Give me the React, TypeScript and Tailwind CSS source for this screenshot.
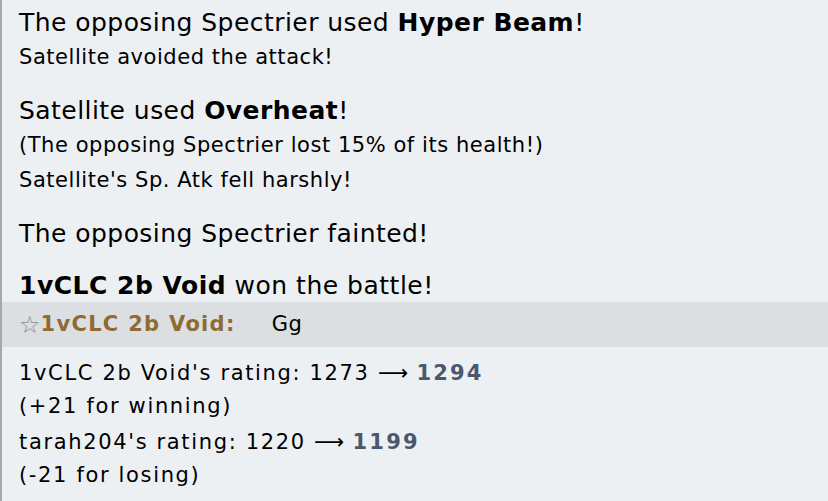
const sans = "font-['DejaVu_Sans',Verdana,sans-serif]";

function Big({ children }: { children: React.ReactNode }) {
  return <div className="text-[25px] leading-[34px] tracking-[0.45px]">{children}</div>;
}

function Small({ children }: { children: React.ReactNode }) {
  return <div className="text-[21px] leading-[35px] tracking-[0.55px]">{children}</div>;
}

function Rating({ name, from, to, note }: { name: string; from: number; to: number; note: string }) {
  return (
    <div>
      {name}'s rating: {from} <span className="tracking-normal">⟶</span>{" "}
      <strong className="text-[#4a586b] tracking-[2.2px]">{to}</strong>
      <br />
      {note}
    </div>
  );
}

export default function App() {
  return (
    <div className={`w-[828px] h-[501px] overflow-hidden bg-[#edf0f3] border-l-2 border-[#a8a8a8] text-black ${sans}`}>
      {/* battle log */}
      <div className="pl-[17px] pt-[6px]">
        <Big>
          The opposing Spectrier used <strong>Hyper Beam</strong>!
        </Big>
        <Small>Satellite avoided the attack!</Small>
      </div>

      <div className="pl-[17px] mt-[19px]">
        <Big>
          Satellite used <strong>Overheat</strong>!
        </Big>
        <Small>(The opposing Spectrier lost 15% of its health!)</Small>
        <Small>Satellite's Sp. Atk fell harshly!</Small>
      </div>

      <div className="pl-[17px] mt-[19px]">
        <Big>The opposing Spectrier fainted!</Big>
      </div>

      <div className="pl-[17px] mt-[19px] text-[25px] leading-[32px] tracking-[0.5px]">
        <strong>1vCLC 2b Void</strong> won the battle!
      </div>

      {/* chat */}
      <div className="h-[45px] bg-[#dbdfe2] pl-[17px] flex items-center text-[21px]">
        <span className="text-[#8a8a8a] text-[24px] leading-none">☆</span>
        <strong className="text-[#8f6b32] tracking-[1.3px]">1vCLC 2b Void:</strong>
        <span className="ml-[36px] tracking-[0.6px]">Gg</span>
      </div>

      {/* ratings */}
      <div className="pl-[17px] pt-[10px] text-[21px] leading-[33px] tracking-[1.65px]">
        <Rating name="1vCLC 2b Void" from={1273} to={1294} note="(+21 for winning)" />
        <div className="mt-[3px]">
          <Rating name="tarah204" from={1220} to={1199} note="(-21 for losing)" />
        </div>
      </div>
    </div>
  );
}
